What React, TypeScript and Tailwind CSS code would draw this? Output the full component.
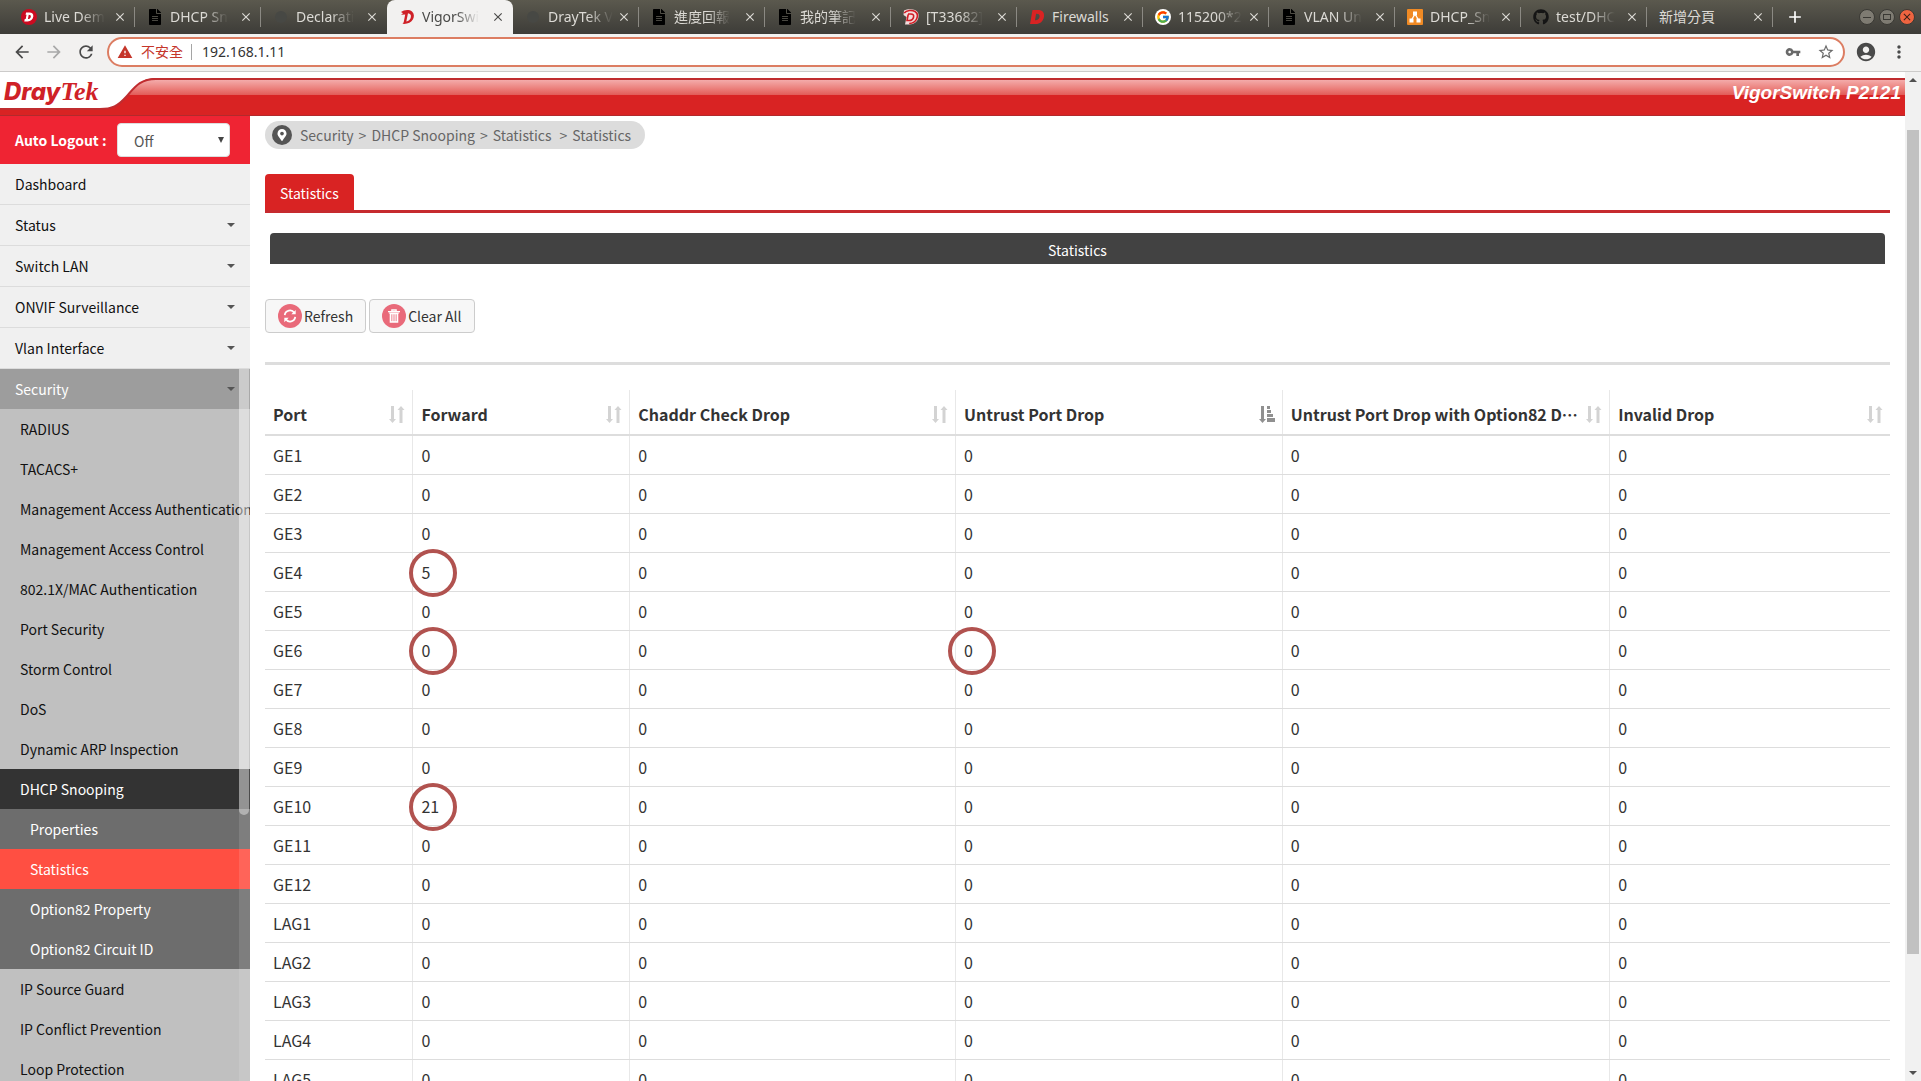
import React from "react";
import { MdArrowBack, MdArrowForward, MdRefresh, MdWarning, MdVpnKey, MdStarBorder, MdAccountCircle, MdMoreVert, MdClose, MdAdd } from "react-icons/md";
import { FaGithub, FaMapMarkerAlt, FaFileAlt } from "react-icons/fa";
import { FcGoogle } from "react-icons/fc";

type Fav = "disc" | "doc" | "faint" | "draytek" | "badge" | "letter" | "google" | "flow" | "github" | "none";

const tabs: { title: string; icon: Fav; active?: boolean; whole?: boolean }[] = [
  { title: "Live Dem", icon: "disc" },
  { title: "DHCP Sn", icon: "doc" },
  { title: "Declarati", icon: "faint" },
  { title: "VigorSwi", icon: "draytek", active: true },
  { title: "DrayTek V", icon: "faint" },
  { title: "進度回報", icon: "doc" },
  { title: "我的筆記", icon: "doc" },
  { title: "[T33682]", icon: "badge" },
  { title: "Firewalls", icon: "letter", whole: true },
  { title: "115200*2", icon: "google" },
  { title: "VLAN Un", icon: "doc" },
  { title: "DHCP_Sn", icon: "flow" },
  { title: "test/DHC", icon: "github" },
  { title: "新增分頁", icon: "none", whole: true },
];

function DMark({ color }: { color: string }) {
  return (
    <path
      fill={color}
      fillRule="evenodd"
      d="M4.5 2.5h4c3.4 0 5.5 1.8 5 5.2C13 11.600 10.200 13.800 6.500 13.800H2.200l.6-3h1.200l1-5.300H3.800zM7.800 5.500l-1 5.300c2-.1 3.300-1.100 3.600-3 .2-1.400-.6-2.300-2.600-2.300z"
    />
  );
}

function Favicon({ kind }: { kind: Fav }) {
  switch (kind) {
    case "none":
      return null;
    case "doc":
      return <FaFileAlt className="size-4 shrink-0 text-black" />;
    case "github":
      return <FaGithub className="size-4 shrink-0 text-[#151515]" />;
    case "google":
      return (
        <span className="flex size-4 shrink-0 items-center justify-center rounded-full bg-white">
          <FcGoogle className="size-3.5" />
        </span>
      );
    case "faint":
      return <span className="mx-0.5 size-3 shrink-0 rounded-full bg-[#474844]" />;
    case "flow":
      return (
        <svg viewBox="0 0 16 16" className="size-4 shrink-0">
          <rect width="16" height="16" rx="1" fill="#f08a24" />
          <path d="M8 5 4.500 11M8 5l3.500 6" stroke="#fff" strokeWidth="1.300" />
          <path fill="#fff" d="M6 2.500h4v4H6zM2.500 9.500h4v4h-4zM9.500 9.500h4v4h-4z" />
        </svg>
      );
    case "disc":
      return (
        <svg viewBox="0 0 16 16" className="size-4 shrink-0">
          <circle cx="8" cy="8" r="8" fill="#cc0a20" />
          <g transform="translate(1.500 1.400) scale(.8)"><DMark color="#fff" /></g>
        </svg>
      );
    case "badge":
      return (
        <svg viewBox="0 0 16 16" className="size-4 shrink-0">
          <path d="M1 1.500C4 0 9 0 12 1c3 1.200 4 4 3.500 7-.8 4.700-4.500 7.500-9 7.500H2L3.500 8 .5 6z" fill="#f3dcdc" />
          <path d="M1.200 4C3.500 1.200 9 .8 12 2.500c2.500 1.500 2.800 4.500 1.800 7-1.200 3-4 4.900-7.600 5" stroke="#d11d25" strokeWidth="1.600" fill="none" />
          <path d="M5 5h3c2 0 3 1 2.600 3-.5 2.500-2 3.500-4.500 3.500H4L5.200 5.500" stroke="#d11d25" strokeWidth="1.600" fill="none" />
        </svg>
      );
    case "letter":
      return (
        <svg viewBox="0 0 16 16" className="size-4 shrink-0">
          <path fill="#d92323" fillRule="evenodd" d="M3.500 1H9c4.500 0 6.500 2.500 6 6.500C14.300 12.500 11 15 6.500 15H1zm3.600 3.800L6 11.200c2.600.2 4.200-1.200 4.600-3.500.3-2-.8-3-3.500-2.900z" />
        </svg>
      );
    case "draytek":
      return (
        <svg viewBox="0 0 16 16" className="size-4 shrink-0">
          <path fill="#cf2027" fillRule="evenodd" d="M2 3C5 .8 10 .2 13 2.500c2.300 1.900 2.400 5.200 1 7.800C12.200 13.700 8 15.300 3.500 14.800l1.200-1.600L6.200 5.500 2 5.800 4 4.200zM9 4.200 7.300 12.500c2.500-.3 4.200-2.200 4.600-4.600C12.200 6 11.300 4.500 9 4.200z" />
        </svg>
      );
  }
}

function BrowserTabs() {
  return (
    <div className="flex h-[34px] shrink-0 items-stretch bg-linear-to-b from-[#5b594e] to-[#3d3c38] pl-[9px] font-['Noto_Sans','Noto_Sans_CJK_TC',sans-serif]">
      <div role="tablist" className="flex min-w-0">
        {tabs.map((t, i) => (
          <div
            key={i}
            role="tab"
            aria-selected={!!t.active}
            className={
              "relative flex w-[126px] min-w-0 items-center pl-3 pr-[7px] text-sm " +
              (t.active ? "rounded-t-lg bg-[#f2f1f0] text-[#4a4a48]" : "text-[#dcdad5]")
            }
          >
            <Favicon kind={t.icon} />
            <span
              className={
                "shrink-0 whitespace-nowrap " +
                (t.whole ? "" : "mask-r-from-60% ") +
                (t.icon === "none" ? "" : "ml-[7px]")
              }
            >
              {t.title}
            </span>
            <button aria-label={"Close " + t.title} className="absolute right-[7px] flex size-4 items-center justify-center">
              <MdClose className="size-3.5" />
            </button>
            {!t.active && i !== 2 && <span className="absolute right-0 top-[7px] h-5 w-px bg-[#8b8983]" />}
          </div>
        ))}
      </div>
      <button aria-label="New tab" className="ml-3 flex w-5 items-center justify-center text-white">
        <MdAdd className="size-5" />
      </button>
      <div className="ml-auto mr-1.5 flex items-center gap-1">
        <button aria-label="Minimize" className="flex size-4 items-center justify-center rounded-full border border-[#3a3934] bg-[#7e7b72]">
          <span className="h-px w-2 bg-[#3a3934]" />
        </button>
        <button aria-label="Maximize" className="flex size-4 items-center justify-center rounded-full border border-[#3a3934] bg-[#7e7b72]">
          <span className="h-1.5 w-2 border border-[#3a3934]" />
        </button>
        <button aria-label="Close window" className="flex size-4 items-center justify-center rounded-full border border-[#3a3934] bg-[#ee6440] text-[#3a2018]">
          <MdClose className="size-3" />
        </button>
      </div>
    </div>
  );
}

function Toolbar() {
  return (
    <div className="flex h-[38px] shrink-0 items-center border-b border-[#cccbca] bg-[#f2f1f0] pr-3 pb-px pl-3 text-[#4a4a4a] font-['Noto_Sans','Noto_Sans_CJK_TC',sans-serif]">
      <div className="flex gap-3">
        <button aria-label="Back"><MdArrowBack className="size-5" /></button>
        <button aria-label="Forward" className="text-[#a8a8a8]"><MdArrowForward className="size-5" /></button>
        <button aria-label="Reload"><MdRefresh className="size-5" /></button>
      </div>
      <div className="ml-[11px] flex h-[30px] min-w-0 flex-1 items-center rounded-full border-2 border-[#dc7d62] bg-white pr-2 pl-2 text-sm">
        <MdWarning className="size-4 shrink-0 text-[#c5362b]" />
        <span className="ml-2 shrink-0 text-[#c5362b]">不安全</span>
        <span className="ml-2 h-4 w-px bg-[#a5a5a5]" />
        <input aria-label="Address" defaultValue="192.168.1.11" className="ml-2.5 min-w-0 flex-1 bg-transparent text-[#333] outline-none" />
        <button aria-label="Passwords" className="mr-4"><MdVpnKey className="size-4 text-[#6a6a6a]" /></button>
        <button aria-label="Bookmark"><MdStarBorder className="size-[18px] text-[#6a6a6a]" /></button>
      </div>
      <button aria-label="Profile" className="ml-2.5"><MdAccountCircle className="size-[22px]" /></button>
      <button aria-label="Menu" className="ml-3"><MdMoreVert className="size-5" /></button>
    </div>
  );
}

function Header() {
  return (
    <header className="relative mt-1.5 h-[38px] shrink-0 border-t-2 border-b border-t-[#c02c2f] border-b-[#b22a2c] bg-[#d92323]">
      <div className="h-[15px] bg-linear-to-b from-[#f3abaa] to-[#e25b58]" />
      <svg viewBox="0 0 160 37" className="absolute -top-0.5 left-0 h-[37px] w-40" aria-hidden="true">
        <path d="M0 0h156C140 0 135 9 126 19 118 28 112 31 100 31H0z" fill="#fff" />
        <path d="M156 1C140 1 135 9 126 19 118 28 112 31 100 31H0" fill="none" stroke="#c02c2f" strokeWidth="2" />
      </svg>
      <a href="#home" className="absolute -top-0.5 left-1 flex items-baseline text-[#cf2127]">
        <span className="font-['Inter',sans-serif] text-2xl leading-7 font-extrabold italic">Dray</span>
        <span className="font-['Liberation_Serif',serif] text-[26px] leading-7 font-bold italic">Tek</span>
      </a>
      <div className="absolute -top-px right-1 font-['Liberation_Sans',sans-serif] text-[19px] leading-7 font-bold text-white italic">
        VigorSwitch P2121
      </div>
    </header>
  );
}

const topItems = ["Dashboard", "Status", "Switch LAN", "ONVIF Surveillance", "Vlan Interface"];
const subItems = [
  "RADIUS",
  "TACACS+",
  "Management Access Authentication",
  "Management Access Control",
  "802.1X/MAC Authentication",
  "Port Security",
  "Storm Control",
  "DoS",
  "Dynamic ARP Inspection",
];
const snoopItems = ["Properties", "Statistics", "Option82 Property", "Option82 Circuit ID"];
const tailItems = ["IP Source Guard", "IP Conflict Prevention", "Loop Protection"];

function Caret() {
  return <span className="border-x-4 border-t-4 border-x-transparent border-t-[#555]" />;
}

function Sidebar() {
  return (
    <aside className="flex w-[250px] shrink-0 flex-col overflow-hidden bg-[#c0c0c0] text-sm text-[#111]">
      <div className="flex h-12 shrink-0 items-center bg-[#ef2433] pl-[15px]">
        <label htmlFor="logout" className="font-bold text-white">Auto Logout :</label>
        <div className="relative ml-auto mr-5">
          <select id="logout" className="h-[34px] w-[113px] appearance-none rounded border border-[#ddd] bg-white pt-0.5 pl-4 text-[#555]">
            <option>Off</option>
          </select>
          <span className="pointer-events-none absolute top-3.5 right-1.5 border-x-[3px] border-t-[6px] border-x-transparent border-t-[#444]" />
        </div>
      </div>
      <nav className="relative">
        {topItems.map((t, i) => (
          <a key={t} href={"#" + t} className="flex h-[41px] items-center justify-between border-b border-[#dcdcdc] bg-[#f0f0f0] px-[15px]">
            {t}
            {i > 0 && <Caret />}
          </a>
        ))}
        <div className="relative">
          <a href="#Security" className="flex h-10 items-center justify-between bg-[#9d9d9d] px-[15px] text-white">
            Security
            <Caret />
          </a>
          {subItems.map((t) => (
            <a key={t} href={"#" + t} className="flex h-10 items-center pl-5 whitespace-nowrap">{t}</a>
          ))}
          <a href="#DHCP" className="flex h-10 items-center bg-[#333] pl-5 text-white">DHCP Snooping</a>
          {snoopItems.map((t) => (
            <a
              key={t}
              href={"#" + t}
              className={"flex h-10 items-center pl-[30px] text-white " + (t === "Statistics" ? "bg-[#ff4f42]" : "bg-[#6d6d6d]")}
            >
              {t}
            </a>
          ))}
          {tailItems.map((t) => (
            <a key={t} href={"#" + t} className="flex h-10 items-center pl-5">{t}</a>
          ))}
          <span className="absolute inset-y-0 right-0 w-[11px] bg-white/12" />
          <span className="absolute top-0 right-px h-[446px] w-2.5 rounded-b-full bg-white/40" />
        </div>
      </nav>
    </aside>
  );
}

function SortIcon({ sorted }: { sorted?: boolean }) {
  return (
    <svg viewBox="0 0 16 17" className={"h-[17px] w-4 shrink-0 " + (sorted ? "text-[#909090]" : "text-[#d3d3d3]")} fill="currentColor">
      <path d="M2 0h3v13h2l-3.500 4L0 13h2z" />
      {sorted ? <path d="M8 0h3v3H8zM8 4h4v3H8zM8 8h6v3H8zM8 12h8v4H8z" /> : <path d="M10.500 17h3V4h2L12 0 8.500 4h2z" />}
    </svg>
  );
}

const columns = ["Port", "Forward", "Chaddr Check Drop", "Untrust Port Drop", "Untrust Port Drop with Option82 D…", "Invalid Drop"];
const ports = ["GE1", "GE2", "GE3", "GE4", "GE5", "GE6", "GE7", "GE8", "GE9", "GE10", "GE11", "GE12", "LAG1", "LAG2", "LAG3", "LAG4", "LAG5"];
const forwarded: Record<string, number> = { GE4: 5, GE10: 21 };
const marked: Record<string, string> = {
  "GE4/0": "-left-1 -top-1",
  "GE6/0": "-left-1 -top-1",
  "GE6/2": "-left-2 -top-1",
  "GE10/0": "-left-1 -top-1",
};

function StatsTable() {
  return (
    <table className="mt-[25px] w-full table-fixed border-collapse text-base text-[#333]">
      <colgroup>
        <col className="w-[9.1%]" />
        <col className="w-[13.35%]" />
        <col className="w-[20.05%]" />
        <col className="w-[20.1%]" />
        <col className="w-[20.15%]" />
        <col />
      </colgroup>
      <thead>
        <tr className="h-[45px]">
          {columns.map((c, i) => (
            <th key={c} className={"border-b-2 border-[#ddd] pt-1 pr-[7px] pb-0 pl-2 text-left font-bold " + (i > 0 ? "border-l border-l-[#e8e8e8]" : "")}>
              <div className="flex items-center justify-between whitespace-nowrap">
                <span lang="zh-TW">{c}</span>
                <SortIcon sorted={i === 3} />
              </div>
            </th>
          ))}
        </tr>
      </thead>
      <tbody>
        {ports.map((p) => (
          <tr key={p} className="h-[39px]">
            <td className="border-b border-[#ddd] px-2 py-0">{p}</td>
            {columns.slice(1).map((c, i) => (
              <td key={c} className="relative border-b border-l border-b-[#ddd] border-l-[#e8e8e8] px-2 py-0">
                {i === 0 ? forwarded[p] ?? 0 : 0}
                {marked[p + "/" + i] && (
                  <span className={"absolute z-10 size-12 rounded-full border-4 border-[#b1524f] " + marked[p + "/" + i]} />
                )}
              </td>
            ))}
          </tr>
        ))}
      </tbody>
    </table>
  );
}

function Content() {
  return (
    <main className="min-w-0 flex-1 bg-white px-[15px] pt-[5px] text-sm text-[#333]">
      <nav aria-label="Breadcrumb" className="flex h-7 w-fit items-center gap-[5px] rounded-full bg-[#dcdcdc] pr-3.5 pl-[7px] text-[#666]">
        <span className="mr-[3px] flex size-5 items-center justify-center rounded-full bg-[#555] text-white">
          <FaMapMarkerAlt className="size-3" />
        </span>
        <a href="#security">Security</a>
        <span>&gt;</span>
        <a href="#dhcp">DHCP Snooping</a>
        <span>&gt;</span>
        <a href="#statistics">Statistics</a>
        <span className="ml-[3px]">&gt;</span>
        <span>Statistics</span>
      </nav>
      <div className="mt-[25px] flex border-b-[3px] border-[#c62a2e]">
        <button className="h-9 rounded-t bg-[#d92323] px-[15px] pt-0.5 text-white">Statistics</button>
      </div>
      <h2 className="mx-[5px] mt-5 flex h-[31px] items-center justify-center rounded-t bg-[#424242] pt-0.5 text-white">Statistics</h2>
      <div className="mt-[35px] flex gap-[3px] border-b-[3px] border-[#ddd] pb-[29px]">
        <button className="flex h-[34px] items-center rounded border border-[#ccc] bg-[#f7f7f7] px-3">
          <span className="mr-0.5 flex size-6 items-center justify-center rounded-full bg-[#e96a7a] text-white">
            <svg viewBox="0 0 16 16" className="size-3.5" fill="none" stroke="currentColor" strokeWidth="2">
              <path d="M2 7a6 6 0 0 1 11-2.500M14 9A6 6 0 0 1 3 11.500" />
              <path d="M14.500 1v5h-5zM1.500 15v-5h5z" fill="currentColor" stroke="none" />
            </svg>
          </span>
          Refresh
        </button>
        <button className="flex h-[34px] items-center rounded border border-[#ccc] bg-[#f7f7f7] px-3">
          <span className="mr-0.5 flex size-6 items-center justify-center rounded-full bg-[#e96a7a] text-white">
            <svg viewBox="0 0 14 16" className="h-3.5 w-3" aria-hidden="true">
              <path d="M1 4h12v1h-1v11H2V5H1z" fill="currentColor" />
              <path d="M0 3h14M4.500 3V1h5v2" fill="none" stroke="currentColor" strokeWidth="1.500" />
              <path d="M4.500 6v8M7 6v8M9.500 6v8" stroke="#e96a7a" strokeWidth="1" />
            </svg>
          </span>
          Clear All
        </button>
      </div>
      <StatsTable />
    </main>
  );
}

export default function App() {
  return (
    <div className="flex h-screen flex-col overflow-hidden bg-white font-['Noto_Sans_CJK_TC',sans-serif]">
      <BrowserTabs />
      <Toolbar />
      <div className="flex min-h-0 flex-1">
        <div className="flex min-w-0 flex-1 flex-col overflow-hidden">
          <Header />
          <div className="flex min-h-0 flex-1 overflow-hidden">
            <Sidebar />
            <Content />
          </div>
        </div>
        <div className="flex w-4 shrink-0 flex-col items-center justify-between bg-[#f1f1f1] py-1.5">
          <span className="border-x-4 border-b-4 border-x-transparent border-b-[#505050]" />
          <span className="mt-12 w-3 flex-[824] bg-[#c1c1c1]" />
          <span className="flex-[117]" />
          <span className="border-x-4 border-t-4 border-x-transparent border-t-[#505050]" />
        </div>
      </div>
    </div>
  );
}
